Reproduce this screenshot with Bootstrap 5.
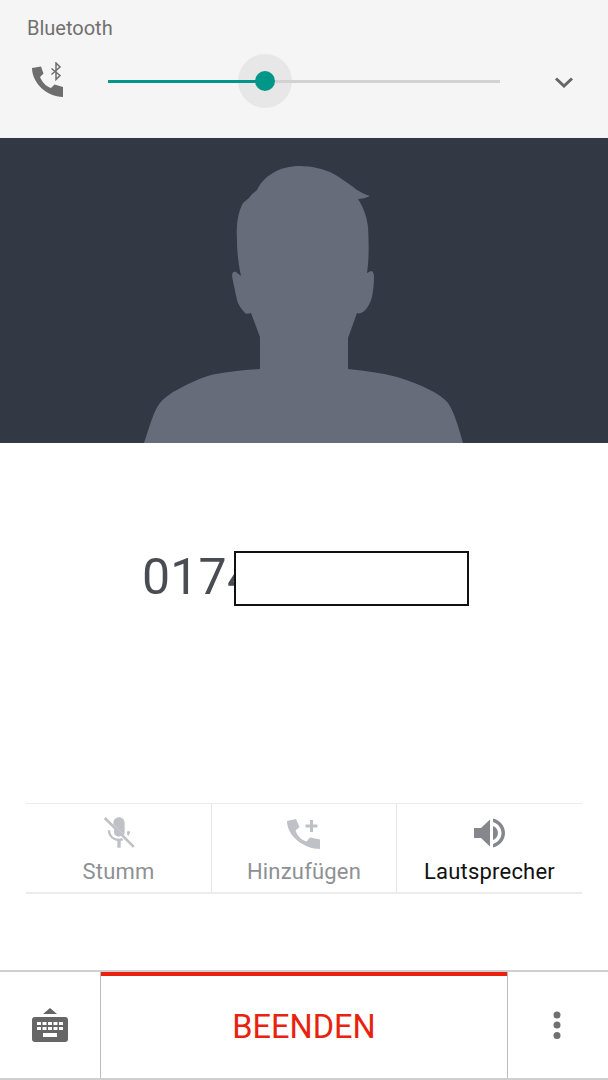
<!DOCTYPE html>
<html lang="de">
<head>
    <meta charset="UTF-8">
    <meta name="viewport" content="width=device-width, initial-scale=1.0">
    <title>Anruf</title>
    <link href="https://cdn.jsdelivr.net/npm/bootstrap@5.3.2/dist/css/bootstrap.min.css" rel="stylesheet">
    <style>
        body { width: 608px; height: 1080px; overflow: hidden; background: #fff; font-family: Roboto, "Liberation Sans", sans-serif; }
        .audio-panel { height: 138px; background: #f5f5f5; border-bottom: 1px solid #f0f2f3; padding: 17px 0 0 27px; }
        .audio-label { font-size: 20px; line-height: 22px; color: #707070; }
        .audio-row { height: 60px; margin-top: 12px; }
        .phone-bt { width: 38px; height: 38px; margin-left: 2px; }
        .slider-box { position: relative; width: 392px; height: 3px; margin-left: 41px; }
        .slider-track { position: relative; height: 3px; background: #d2d2d2; }
        .slider-fill { height: 3px; background: #009688; }
        .slider-halo { position: absolute; left: 130px; top: -26px; width: 54px; height: 54px; border-radius: 50%; background: #e7e7e7; }
        .slider-thumb { position: absolute; left: 147px; top: -9px; width: 20px; height: 20px; border-radius: 50%; background: #009688; }
        .chevron { width: 20px; height: 14px; margin-left: 54px; }
        .photo { display: block; width: 608px; height: 305px; }
        .number-area { height: 360px; padding-left: 142px; padding-top: 103px; }
        .number-wrap { position: relative; }
        .number-text { font-size: 50px; line-height: 62px; font-weight: 400; color: #4a4c53; letter-spacing: .2px; }
        .redact { position: absolute; left: 92px; top: 5px; width: 235px; height: 55px; background: #fff; border: 2px solid #111; }
        .actions { margin: 0 26px; height: 91px; border-top: 1px solid #e9e9e9; border-bottom: 2px solid #ececec; }
        .action-cell { height: 100%; padding-top: 11px; font-size: 22px; line-height: 24px; color: #8e9095; letter-spacing: .2px; }
        .action-cell + .action-cell { border-left: 1px solid #e6e6e6; }
        .action-cell.on { color: #111; }
        .action-cell svg { display: block; width: 36px; height: 36px; margin-bottom: 9px; }
        .call-bar { margin-top: 76px; height: 110px; border-top: 2px solid #cfcfcf; border-bottom: 2px solid #cfcfcf; }
        .side-left { width: 101px; border-right: 1px solid #bcbcbc; }
        .side-right { flex: 1; border-left: 1px solid #bcbcbc; }
        .end-call { width: 406px; border-top: 4px solid #e8220e; font-size: 32.500px; color: #e8220e; }
        .side-left svg { width: 40px; height: 40px; }
        .side-right svg { width: 10px; height: 30px; margin-right: 2px; }
    </style>
</head>
<body>
    <div class="audio-panel">
        <div class="audio-label">Bluetooth</div>
        <div class="audio-row d-flex align-items-center">
            <svg class="phone-bt flex-shrink-0" viewBox="0 0 38 38">
                <path fill="#6e6e6e" d="M3 6 L12 4.500 L14.500 11.500 L11 15 C13 20 17 24.500 22 26 L25.500 22.500 L34 25 L34 35 C18 35 3 21 3 6 Z"/>
                <path fill="none" stroke="#6e6e6e" stroke-width="1.500" d="M22.500 6.500 L31 13.500 L27 17.500 L27 1 L31 5 L22.500 12.500"/>
            </svg>
            <div class="slider-box flex-shrink-0">
                <div class="slider-halo"></div>
                <div class="slider-track">
                    <div class="slider-fill" style="width: 156px"></div>
                </div>
                <div class="slider-thumb"></div>
            </div>
            <svg class="chevron flex-shrink-0" viewBox="0 0 20 14">
                <path fill="none" stroke="#666" stroke-width="3" d="M2 4.500 L10 12 L18 4.500"/>
            </svg>
        </div>
    </div>

    <svg class="photo" viewBox="0 138 608 305">
        <rect x="0" y="138" width="608" height="305" fill="#333845"/>
        <path fill="#676c7a" d="M144 443 C150 425 154 410 160 403 C164 398 169 395 173 392 C186 385 199 378 213 374.500 C228 371.500 245 370 260 369 L260 337 L251 313 C248 314 246 314 245 313 C241 309 238 304 237 300 C235 290 233 282 232 276 C232 272 234 271 236 272 L241 276 C238 262 237 250 237 240 C236 225 238 212 243 203 L249 198 C252 193 255 192 257 190 C262 180 268 176 273 173 C281 168 290 166 300 166 C312 166 322 169 330 172 C340 177 349 184 357 190 C362 193 366 195 370 196 C366 198 362 199 358 199 C364 208 367 218 368 227 C369 245 369 260 367 273 L371 271 C373 271 374 274 374 277 C374 285 373 291 372 297 C370 304 367 309 363 312 C361 313 359 314 357 313 L348 338 L348 369 C366 371 382 373 397 377 C410 381 421 385 430 390 C438 394 444 398 448 403 C454 412 458 425 463 443 Z"/>
    </svg>

    <div class="number-area">
        <div class="number-wrap">
            <span class="number-text">0174</span>
            <div class="redact"></div>
        </div>
    </div>

    <div class="actions d-flex">
        <div class="action-cell d-flex flex-column align-items-center" style="width: 185px">
            <svg viewBox="2 2 32 32" fill="#c0c1c6">
                <path d="M13 9 C13 6 15.500 4 18 4 C20.500 4 23 6 23 9 L23 17 C23 18 22.800 19 22.400 20 L13 10.500 Z"/>
                <path d="M14 14 L20 20 C19 21 18.500 21.200 18 21.200 C15.500 21.200 13.500 19 13.500 17 Z"/>
                <path d="M8 15.500 L10.200 15.500 C10.200 19.500 13 23 18 23 C18.800 23 19.600 22.900 20.400 22.500 L22 24.200 C21 24.700 20 25 19.500 25 L19.500 31 L16.500 31 L16.500 25 C12 24.500 8 20.500 8 15.500 Z M25.200 16.500 L28 16.500 C27.800 18 27.300 19.500 26.500 20.500 L25 19 C25.200 18.500 25.200 17.500 25.200 16.500 Z"/>
                <path d="M4.500 5.500 L6.200 3.800 L32 29.500 L30.300 31.200 Z"/>
            </svg>
            Stumm
        </div>
        <div class="action-cell d-flex flex-column align-items-center" style="width: 185px">
            <svg viewBox="0 0 36 36" fill="#c0c1c6">
                <path d="M1 6 L10 4 L13.500 12 L9.500 15.500 C11 20.500 15 25 20.500 26.500 L24 22.500 L34 24.500 L34 34 C18 34 1 21 1 6 Z"/>
                <path d="M24 5 L27 5 L27 9.500 L31.500 9.500 L31.500 12.500 L27 12.500 L27 17 L24 17 L24 12.500 L19.500 12.500 L19.500 9.500 L24 9.500 Z"/>
            </svg>
            Hinzufügen
        </div>
        <div class="action-cell on d-flex flex-column align-items-center flex-fill">
            <svg viewBox="0 0 36 36" fill="#85878c">
                <path d="M2 13 L9 13 L18 4.500 L18 31.500 L9 23 L2 23 Z"/>
                <path d="M21 11 C24 12 26 15 26 18 C26 21 24 24 21 25 Z"/>
                <path d="M21 3.500 C28 5 33 11 33 18 C33 25 28 31 21 32.500 L21 29 C26 27.500 29.500 23 29.500 18 C29.500 13 26 8.500 21 7 Z"/>
            </svg>
            Lautsprecher
        </div>
    </div>

    <div class="call-bar d-flex">
        <div class="side-left d-flex justify-content-center align-items-center">
            <svg viewBox="0 0 40 40">
                <path fill="#666" d="M13 9 L20 3 L27 9 Z"/>
                <rect x="2" y="12" width="36" height="25" rx="3" fill="#666"/>
                <g fill="#fff">
                    <rect x="7" y="17" width="4" height="3"/><rect x="12.500" y="17" width="4" height="3"/><rect x="18" y="17" width="4" height="3"/><rect x="23.500" y="17" width="4" height="3"/><rect x="29" y="17" width="4" height="3"/>
                    <rect x="7" y="22" width="4" height="3"/><rect x="12.500" y="22" width="4" height="3"/><rect x="18" y="22" width="4" height="3"/><rect x="23.500" y="22" width="4" height="3"/><rect x="29" y="22" width="4" height="3"/>
                    <rect x="13" y="28" width="14" height="4"/>
                </g>
            </svg>
        </div>
        <div class="end-call d-flex justify-content-center align-items-center">BEENDEN</div>
        <div class="side-right d-flex justify-content-center align-items-center">
            <svg viewBox="0 0 10 30" fill="#707070">
                <circle cx="5" cy="5" r="3.500"/><circle cx="5" cy="15" r="3.500"/><circle cx="5" cy="25.500" r="3.500"/>
            </svg>
        </div>
    </div>

    <script src="https://cdn.jsdelivr.net/npm/bootstrap@5.3.2/dist/js/bootstrap.bundle.min.js"></script>
</body>
</html>
